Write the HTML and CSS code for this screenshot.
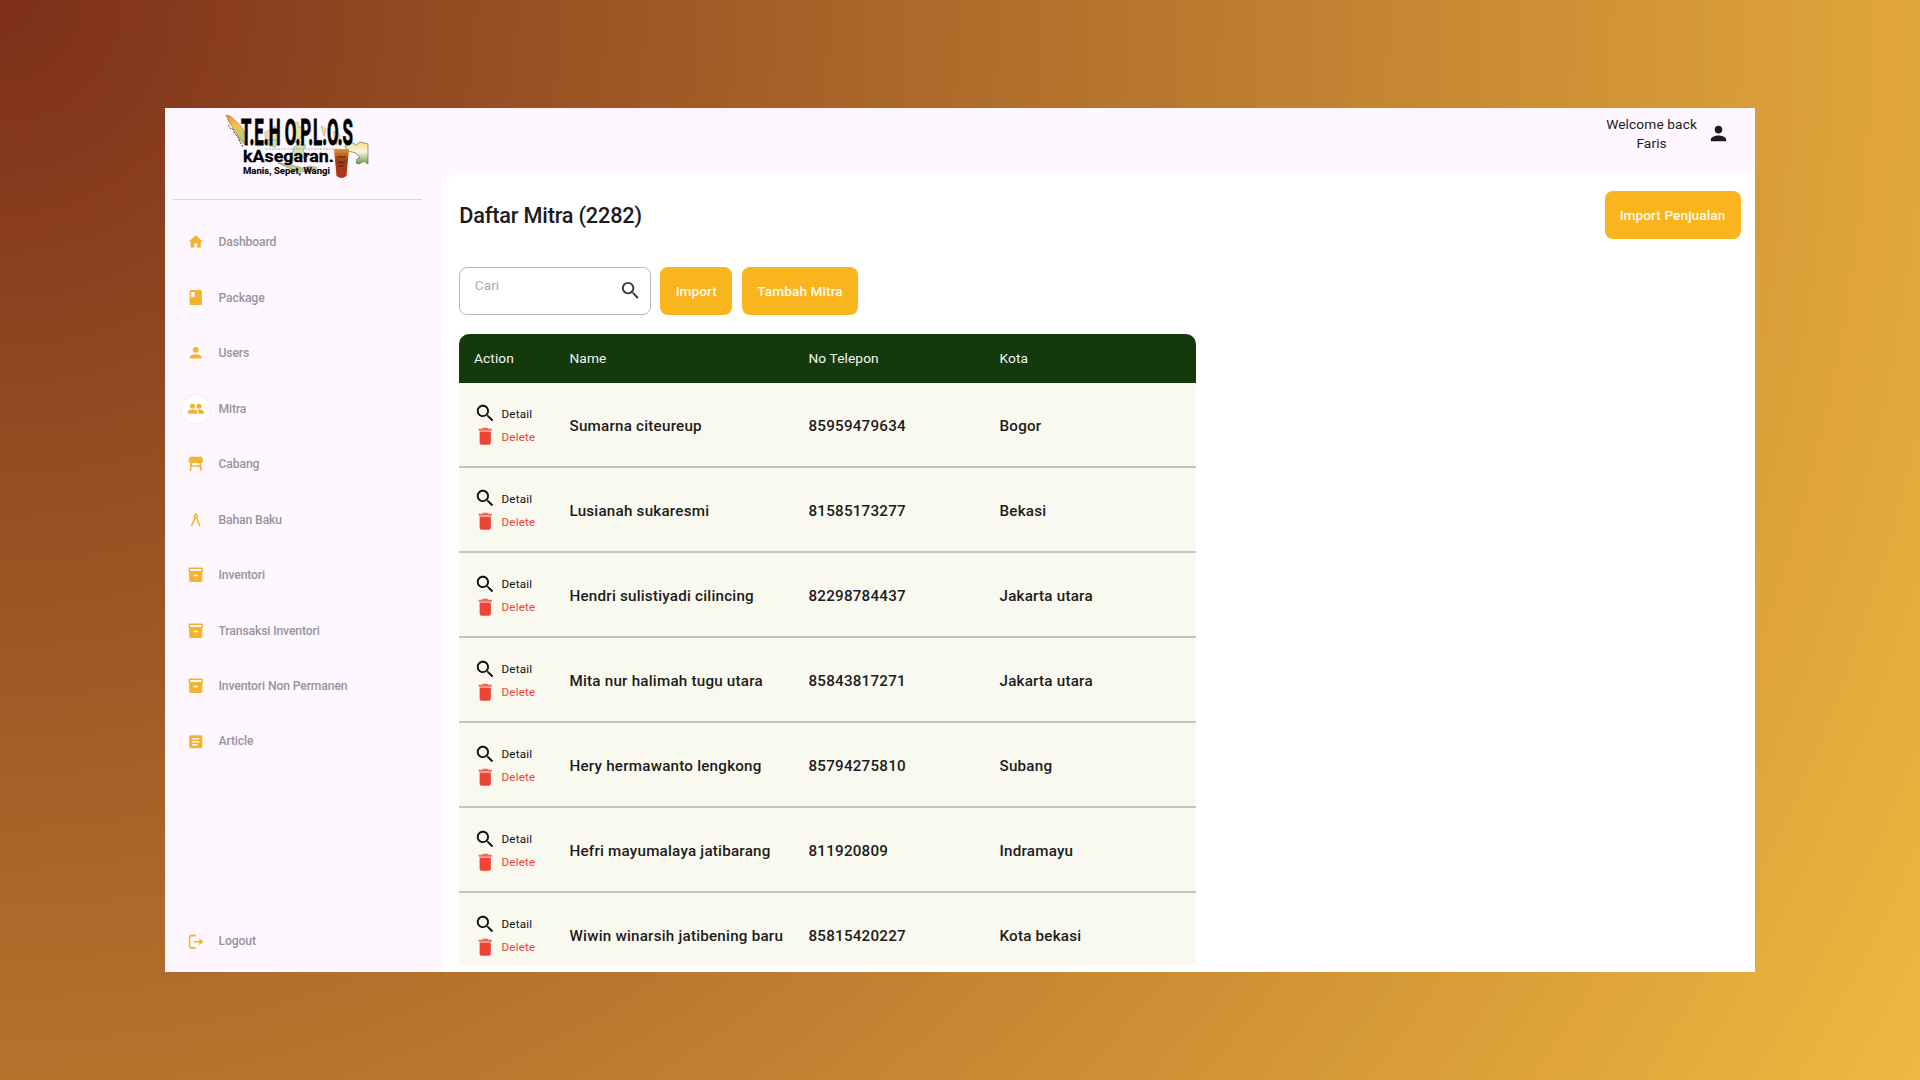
FILE: index.html
```html
<!DOCTYPE html>
<html lang="id">
<head>
<meta charset="utf-8">
<title>Daftar Mitra</title>
<link rel="stylesheet" href="styles.css">
</head>
<body>
<svg class="symbols" aria-hidden="true">
  <symbol id="home" viewBox="0 0 24 24"><path d="M10 20v-6h4v6h5v-8h3L12 3 2 12h3v8z"/></symbol>
  <symbol id="book" viewBox="0 0 24 24"><path d="M19 0H5C3.500 0 2.500 1 2.500 2.500v19c0 1.500 1 2.500 2.500 2.500h14c1.500 0 2.500-1 2.500-2.500v-19C21.500 1 20.500 0 19 0zM5 3h5.500v8.500L7.800 10 5 11.500V3z"/></symbol>
  <symbol id="person" viewBox="0 0 24 24"><path d="M12 12c2.210 0 4-1.790 4-4s-1.790-4-4-4-4 1.790-4 4 1.790 4 4 4zm0 2c-2.670 0-8 1.340-8 4v2h16v-2c0-2.660-5.330-4-8-4z"/></symbol>
  <symbol id="people" viewBox="0 0 24 24"><path d="M16.500 13c-1.200 0-3.070.34-4.500 1-1.430-.67-3.300-1-4.500-1C5.330 13 1 14.080 1 16.250V19h22v-2.750c0-2.170-4.330-3.250-6.500-3.250zM7.500 12c1.930 0 3.500-1.570 3.500-3.500S9.430 5 7.500 5 4 6.570 4 8.500 5.570 12 7.500 12zm9 0c1.930 0 3.500-1.570 3.500-3.500S18.430 5 16.500 5 13 6.570 13 8.500s1.570 3.500 3.500 3.500z"/><path class="gap" d="M13 13.500c1.500 1 2 2 2 3.500v2.500"/></symbol>
  <symbol id="stall" viewBox="0 0 24 24"><path d="M4 2.500h16l2 4.500c0 2.200-1 4-2.800 4l1.500 10.500h-2.400L17.600 16H6.400l-.7 5.500H3.300L4.800 11C3 11 2 9.200 2 7zm3.200 8.500-.4 3h10.400l-.4-3z"/></symbol>
  <symbol id="compass" viewBox="0 0 24 24"><path d="M12 1.500v3M12 4.500a2.500 2.500 0 1 1 0 5 2.500 2.500 0 0 1 0-5M10.800 9.500 6 20.500v1.500M13.200 9.500l4.800 11v1.500" fill="none" stroke="currentColor" stroke-width="2.300"/></symbol>
  <symbol id="box" viewBox="0 0 24 24"><path d="M20 2H4c-1 0-2 .9-2 2v3.010c0 .72.43 1.340 1 1.690V20c0 1.100 1.100 2 2 2h14c.9 0 2-.9 2-2V8.700c.57-.35 1-.97 1-1.690V4c0-1.100-1-2-2-2zm-5 12H9v-2h6v2zm5-7H4V4h16v3z"/></symbol>
  <symbol id="article" viewBox="0 0 24 24"><path d="M19 3H5c-1.100 0-2 .9-2 2v14c0 1.100.9 2 2 2h14c1.100 0 2-.9 2-2V5c0-1.100-.9-2-2-2zm-5 14H7v-2h7v2zm3-4H7v-2h10v2zm0-4H7V7h10v2z"/></symbol>
  <symbol id="logout" viewBox="0 0 24 24"><path d="M12 2.500H4.500a2 2 0 0 0-2 2v15a2 2 0 0 0 2 2H12M8.500 12H20" fill="none" stroke="currentColor" stroke-width="2.400"/><path d="M17.500 6.500l6.500 5.500-6.500 5.500z"/></symbol>
  <symbol id="search" viewBox="0 0 24 24"><path d="M15.500 14h-.79l-.28-.27C15.410 12.590 16 11.110 16 9.500 16 5.910 13.090 3 9.500 3S3 5.910 3 9.500 5.910 16 9.500 16c1.610 0 3.090-.59 4.230-1.570l.27.28v.79l5 4.990L20.490 19l-4.990-5zm-6 0C7.010 14 5 11.990 5 9.500S7.010 5 9.500 5 14 7.010 14 9.500 11.990 14 9.500 14z"/></symbol>
  <symbol id="trash" viewBox="0 0 24 24"><path d="M6 19c0 1.100.9 2 2 2h8c1.100 0 2-.9 2-2V7H6v12z"/><path d="M19 4h-3.500l-1-1h-5l-1 1H5v2h14V4z" opacity=".8"/></symbol>
</svg>

<div class="app">
  <aside class="sidebar">
    <div class="brand">
      <svg class="logo" viewBox="0 0 150 72" role="img" aria-label="Teh Oplos">
        <defs>
          <linearGradient id="sumatra" x1="0" y1="0" x2=".6" y2="1"><stop offset="0" stop-color="#ef8f1c"/><stop offset=".5" stop-color="#f5c257"/><stop offset="1" stop-color="#a9c97c"/></linearGradient>
          <linearGradient id="papua" x1="0" y1="0" x2="0" y2="1"><stop offset="0" stop-color="#f6dc8a"/><stop offset=".45" stop-color="#f7f6dc"/><stop offset="1" stop-color="#6f9c50"/></linearGradient>
          <linearGradient id="tea" x1="0" y1="0" x2="0" y2="1"><stop offset="0" stop-color="#d99a2b"/><stop offset=".4" stop-color="#a33a14"/><stop offset="1" stop-color="#b43416"/></linearGradient>
        </defs>
        <path d="M6 5l4 1 8 7 5 6 3 8-1 8-5-5-5-9-6-9z" fill="url(#sumatra)" stroke="#8a6a2a" stroke-width=".5"/>
        <path d="M8 15l3 4 2 0 2 5 3 3 2 5 3 5" fill="none" stroke="#333" stroke-width="1" stroke-dasharray="2 1.200"/>
        <path d="M45 22l5-2 5-4 2 5 1 11-6 4-6-3zM74 13l4-1 1 6 4-3 2 5-5 9-5 4zM101 16l5 3-2 7zM113 22l4-1 3 5-3 9z" fill="#f3e0a0" stroke="#8d9566" stroke-width=".5"/>
        <path d="M45 30h14l-4 7-9-2zM73 38l5-4 8 1-3 6 5 6-4 1-5-4-4 5-5-2 3-5z" fill="#cfe2b2" stroke="#6b8057" stroke-width=".5"/>
        <path d="M46 39h72" stroke="#aaa" stroke-width=".9" stroke-dasharray="2 1" fill="none"/>
        <path d="M58 53l14 2 10 3 9-2 6 2-6 3-11 1-9-3z" fill="#b6d192" stroke="#6b8057" stroke-width=".5"/>
        <path d="M127 32l6 1 3 2 4-3 8 2v20l-4-3-5 3-3-1 1-4 3-1-4-5-8-2-3-5z" fill="url(#papua)" stroke="#4d6138" stroke-width=".6"/>
        <text class="logo-title" x="21" y="35.300" textLength="112" lengthAdjust="spacingAndGlyphs">T.E.H O.P.L.O.S</text>
        <text class="logo-sub" x="23" y="52.300" textLength="91" lengthAdjust="spacingAndGlyphs">kAsegaran.</text>
        <text class="logo-tag" x="23" y="63.800" textLength="87" lengthAdjust="spacingAndGlyphs">Manis, Sepet, Wangi</text>
        <path d="M114 39h15l-2.500 27q-5 4-10 0z" fill="url(#tea)"/>
        <path d="M117 47h9M118 52l7 1M118 56h6" stroke="#5d1d0d" stroke-width="1.200"/>
      </svg>
    </div>
    <nav class="menu">
      <a class="item"><span class="dot"><svg><use href="#home"/></svg></span>Dashboard</a>
      <a class="item"><span class="dot"><svg class="small"><use href="#book"/></svg></span>Package</a>
      <a class="item"><span class="dot"><svg><use href="#person"/></svg></span>Users</a>
      <a class="item active"><span class="dot"><svg><use href="#people"/></svg></span>Mitra</a>
      <a class="item"><span class="dot"><svg><use href="#stall"/></svg></span>Cabang</a>
      <a class="item"><span class="dot"><svg class="small"><use href="#compass"/></svg></span>Bahan Baku</a>
      <a class="item"><span class="dot"><svg><use href="#box"/></svg></span>Inventori</a>
      <a class="item"><span class="dot"><svg><use href="#box"/></svg></span>Transaksi Inventori</a>
      <a class="item"><span class="dot"><svg><use href="#box"/></svg></span>Inventori Non Permanen</a>
      <a class="item"><span class="dot"><svg><use href="#article"/></svg></span>Article</a>
    </nav>
    <a class="item logout"><span class="dot"><svg class="small"><use href="#logout"/></svg></span>Logout</a>
  </aside>

  <div class="main">
    <header class="topbar">
      <div class="welcome">Welcome back<br>Faris</div>
      <svg class="avatar"><use href="#person"/></svg>
    </header>
    <section class="panel">
      <div class="heading">
        <h1>Daftar Mitra (2282)</h1>
        <button class="btn">Import Penjualan</button>
      </div>
      <div class="tools">
        <div class="search"><span>Cari</span><svg><use href="#search"/></svg></div>
        <button class="btn import">Import</button>
        <button class="btn add">Tambah Mitra</button>
      </div>
      <div class="table">
        <div class="row head"><span>Action</span><span>Name</span><span>No Telepon</span><span>Kota</span></div>
        <div class="row"><div class="actions"><a><svg><use href="#search"/></svg>Detail</a><a class="del"><svg><use href="#trash"/></svg>Delete</a></div><span>Sumarna citeureup</span><span>85959479634</span><span>Bogor</span></div>
        <div class="row"><div class="actions"><a><svg><use href="#search"/></svg>Detail</a><a class="del"><svg><use href="#trash"/></svg>Delete</a></div><span>Lusianah sukaresmi</span><span>81585173277</span><span>Bekasi</span></div>
        <div class="row"><div class="actions"><a><svg><use href="#search"/></svg>Detail</a><a class="del"><svg><use href="#trash"/></svg>Delete</a></div><span>Hendri sulistiyadi cilincing</span><span>82298784437</span><span>Jakarta utara</span></div>
        <div class="row"><div class="actions"><a><svg><use href="#search"/></svg>Detail</a><a class="del"><svg><use href="#trash"/></svg>Delete</a></div><span>Mita nur halimah tugu utara</span><span>85843817271</span><span>Jakarta utara</span></div>
        <div class="row"><div class="actions"><a><svg><use href="#search"/></svg>Detail</a><a class="del"><svg><use href="#trash"/></svg>Delete</a></div><span>Hery hermawanto lengkong</span><span>85794275810</span><span>Subang</span></div>
        <div class="row"><div class="actions"><a><svg><use href="#search"/></svg>Detail</a><a class="del"><svg><use href="#trash"/></svg>Delete</a></div><span>Hefri mayumalaya jatibarang</span><span>811920809</span><span>Indramayu</span></div>
        <div class="row"><div class="actions"><a><svg><use href="#search"/></svg>Detail</a><a class="del"><svg><use href="#trash"/></svg>Delete</a></div><span>Wiwin winarsih jatibening baru</span><span>85815420227</span><span>Kota bekasi</span></div>
      </div>
    </section>
  </div>
</div>
</body>
</html>
```
FILE: styles.css
```css
* { box-sizing: border-box; }

body {
  margin: 0;
  width: 1920px;
  height: 1080px;
  padding: 108px 165px;
  overflow: hidden;
  background: radial-gradient(circle farthest-corner at 0 0, #7d2f1a, #f0b840);
  font-family: Roboto, "Liberation Sans", sans-serif;
  color: #1d1b20;
}

.symbols { display: none; }
svg { fill: currentColor; flex: none; }

.app {
  display: flex;
  width: 1590px;
  height: 864px;
  overflow: hidden;
  background: #fef7ff;
}

/* Sidebar */
.sidebar {
  display: flex;
  flex-direction: column;
  flex: none;
  width: 276.500px;
}
.brand {
  height: 91.500px;
  margin: 0 20px 15px 7.500px;
  padding: 2px 0 0 47.500px;
  border-bottom: 1px solid #dcd6e0;
}
.logo { display: block; width: 150px; height: 72px; overflow: visible; }
.logo text { fill: #000; stroke: #000; }
.logo-title { font: 700 36px Roboto, sans-serif; stroke-width: .9px; }
.logo-sub { font: 700 17px Roboto, sans-serif; stroke-width: .3px; }
.logo-tag { font: 700 9.800px Roboto, sans-serif; stroke-width: .1px; }

.item {
  display: flex;
  align-items: center;
  gap: 8.500px;
  height: 55.480px;
  padding-left: 17px;
  font-size: 12.200px;
  font-weight: 500;
  letter-spacing: -.14px;
  color: #98949b;
}
.dot {
  display: flex;
  align-items: center;
  justify-content: center;
  width: 28px;
  height: 28px;
  border-radius: 50%;
  color: #f3b32c;
}
.dot svg { width: 17.500px; height: 17.500px; }
.dot .small { width: 15.500px; height: 15.500px; }
.active .dot { background: #fff; box-shadow: 0 0 2px rgba(0, 0, 0, .12); }
.gap { fill: none; stroke: #fff; stroke-width: 1.500px; }
.logout { margin-top: auto; margin-bottom: 3px; }

/* Content */
.main { display: flex; flex-direction: column; flex: 1; }
.topbar {
  display: flex;
  justify-content: flex-end;
  gap: 10px;
  height: 64.500px;
  padding: 7px 25px 0 0;
}
.welcome {
  font-size: 13.700px;
  line-height: 19px;
  letter-spacing: .12px;
  text-align: center;
}
.avatar { width: 23px; height: 23px; margin-top: 6.500px; }

.panel {
  flex: 1;
  min-height: 0;
  padding: 18.400px 14.500px 7.500px 17.800px;
  border-top-left-radius: 20px;
  background: #fff;
  display: flex;
  flex-direction: column;
}
.heading { display: flex; justify-content: space-between; align-items: center; height: 48px; }
h1 { margin: 1px 0 0; font-size: 21.700px; font-weight: 500; letter-spacing: -.18px; }
.btn {
  width: 136px;
  height: 48px;
  padding: 0;
  border: 0;
  border-radius: 8px;
  background: #f9b41e;
  color: #fffaf0;
  font: 500 13.700px Roboto, sans-serif;
  letter-spacing: .05px;
}
.import { width: 72px; }
.add { width: 116.500px; }
.tools { display: flex; gap: 9.500px; margin-top: 28px; }
.search {
  display: flex;
  justify-content: space-between;
  width: 191.500px;
  height: 48px;
  padding: 11.500px 8px 0 14.500px;
  border: 1.500px solid #b0b8c2;
  border-radius: 8px;
  color: #3c3c3c;
}
.search span { margin-top: -2px; font-size: 13.700px; line-height: 16px; color: #a3adba; letter-spacing: 0; }
.search svg { width: 23px; height: 23px; }

.table {
  flex: 1;
  min-height: 0;
  width: 736.300px;
  margin-top: 18.900px;
  overflow: hidden;
  border-radius: 10px 10px 0 0;
}
.row {
  display: grid;
  grid-template-columns: 95.500px 239px 191px 1fr;
  align-items: center;
  height: 85.080px;
  padding: 2px 0 0 14.700px;
  border-bottom: 2px solid #c1c7c2;
  background: #f9f9f0;
  font-size: 15.200px;
  font-weight: 500;
  letter-spacing: .22px;
}
.head {
  height: 48.800px;
  padding-top: 0;
  padding-bottom: 1px;
  border: 0;
  background: #14390d;
  color: #f1f8ef;
  font-size: 13.700px;
  font-weight: 400;
  letter-spacing: .12px;
}
.row > span { padding-top: 1px; }
.head > span { padding-top: 0; }
.actions { display: flex; flex-direction: column; }
.actions a {
  display: flex;
  align-items: center;
  gap: 5px;
  height: 23px;
  font-size: 11.600px;
  font-weight: 400;
  color: #111;
}
.actions svg { width: 22.500px; height: 22.500px; }
.actions .del { color: #ee4438; }
```
